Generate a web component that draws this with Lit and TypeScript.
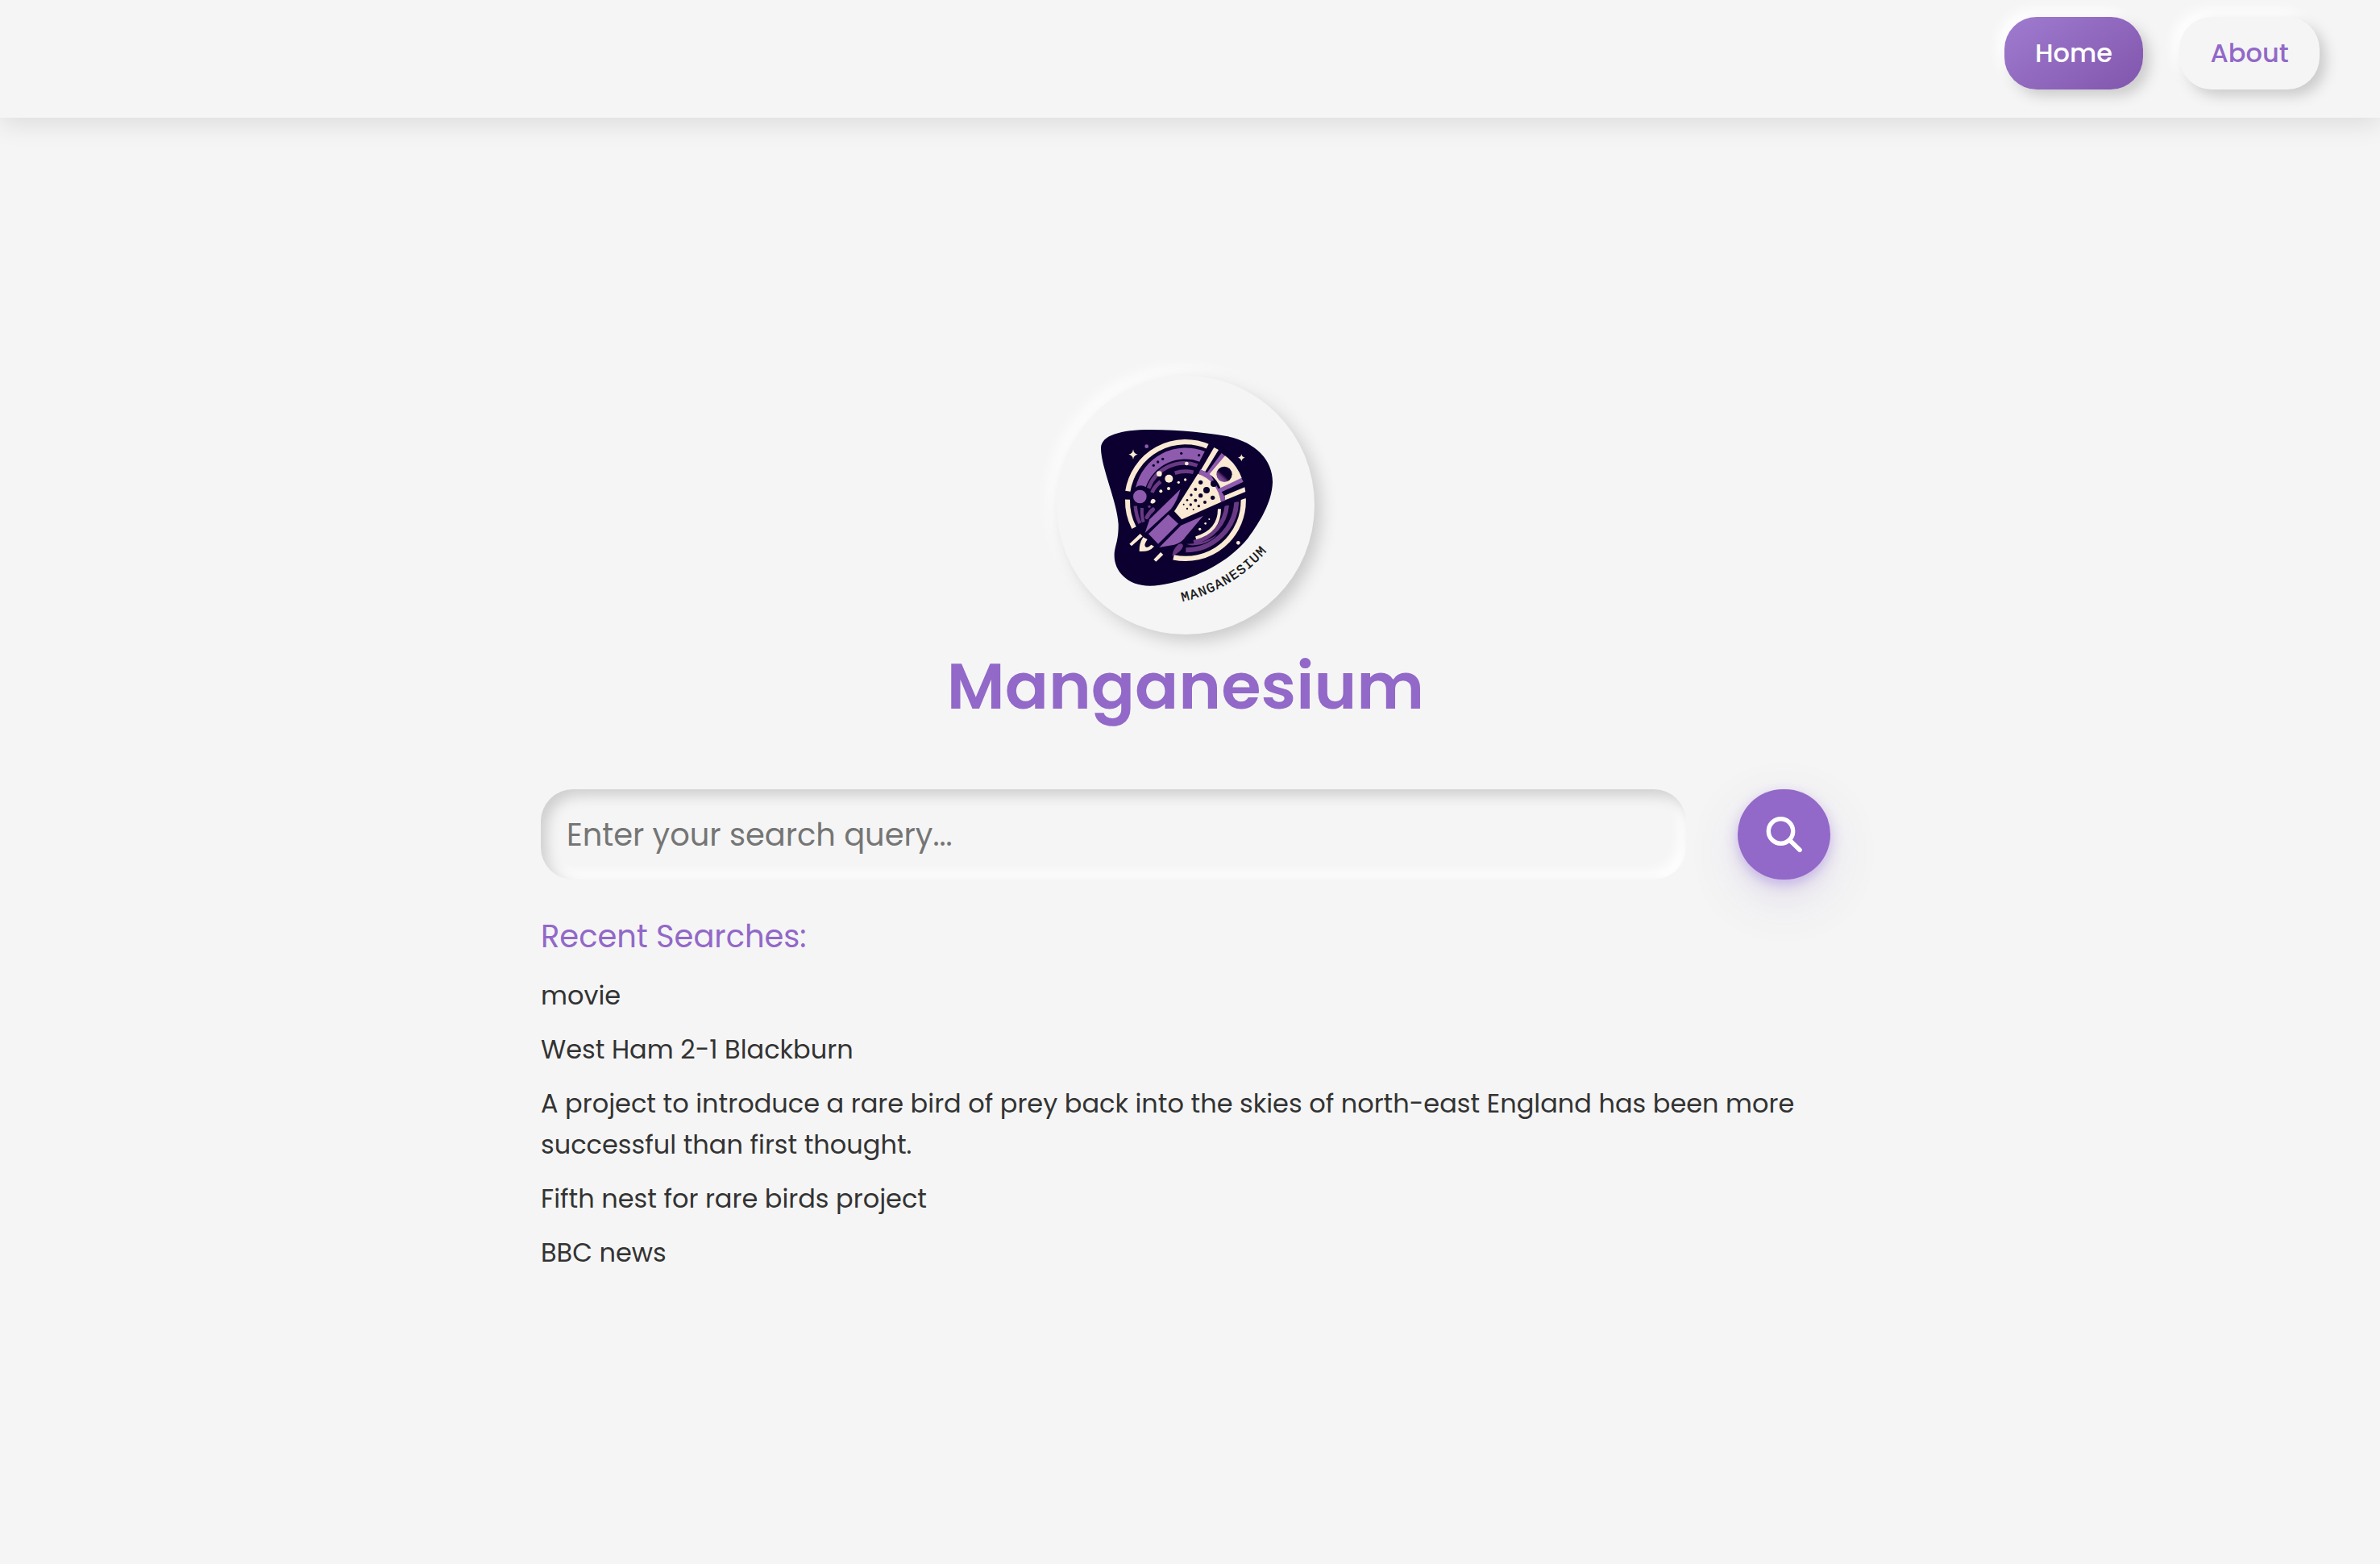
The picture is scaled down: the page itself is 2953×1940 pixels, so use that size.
import { LitElement, html, css, svg } from "lit";
import { customElement, property } from "lit/decorators.js";
import { classMap } from "lit/directives/class-map.js";

type Dot = [x: number, y: number, r: number];

const CREAM_DOTS: Dot[] = [
  [576, 435, 7], [474, 473, 10], [510, 491, 15], [571, 495, 5], [546, 505, 5],
  [509, 528, 6], [480, 538, 6], [660, 642, 3], [646, 658, 4], [625, 679, 5], [768, 730, 7],
];

const DARK_DOTS: Dot[] = [
  [556, 397, 5], [622, 404, 5], [487, 418, 5], [469, 429, 5], [453, 442, 5],
  [628, 505, 8], [677, 510, 12], [609, 531, 6], [650, 534, 12], [593, 552, 5],
  [628, 554, 8], [673, 562, 8], [578, 571, 4], [609, 572, 6], [644, 579, 6],
  [565, 587, 3], [591, 588, 5], [621, 593, 5], [578, 603, 3.5], [601, 606, 3],
];

@customElement("mg-emblem")
class Emblem extends LitElement {
  static styles = css`
    :host { display: block; width: 320px; height: 321px; }
    svg { display: block; width: 100%; height: 100%; }
    .ink { fill: #0b0030; }
    .cream { fill: #faead3; }
    .purple { fill: #8f5bae; }
    .plum { fill: #693a83; }
    .line { fill: none; }
    .line.cream-line { stroke: #faead3; }
    .line.plum-line { stroke: #693a83; }
    .wordmark {
      font: 400 50px "Liberation Mono", "DejaVu Sans Mono", monospace;
      fill: #111;
      stroke: #111;
      stroke-width: 1;
    }
  `;

  private dots(list: Dot[], cls: string) {
    return list.map(([x, y, r]) => svg`<circle class=${cls} cx=${x} cy=${y} r=${r}></circle>`);
  }

  render() {
    return html`
      <svg viewBox="92 108 960 963" role="img" aria-label="Manganesium">
        <defs>
          <linearGradient id="moon" x1="0.1" y1="0.9" x2="0.65" y2="0.3">
            <stop offset="0" stop-color="#8f5bae"></stop>
            <stop offset="0.4" stop-color="#693a83"></stop>
            <stop offset="0.65" stop-color="#0b0030"></stop>
          </linearGradient>
          <path id="curve" d="M560 949 Q755 903 882 752"></path>
        </defs>

        <path class="ink" d="M257 380 C255 330 330 309 440 309 C560 310 650 321 720 332 C830 352 897 420 896 505 C893 580 850 650 805 712 C725 815 560 885 440 890 C350 890 305 830 307 775 C308 740 323 725 322 660 C318 580 258 450 257 380 Z"></path>

        <!-- porthole rim -->
        <path class="line cream-line" stroke-width="19" d="M357 538 A217 217 0 0 1 659 373"></path>
        <path class="line cream-line" stroke-width="18" d="M356 569 A216 216 0 0 0 380 674"></path>
        <path class="line cream-line" stroke-width="19" d="M787 565 A215 215 0 0 1 527 784"></path>

        <!-- orbit bands -->
        <path class="purple" d="M386 524 A192 192 0 0 1 646 391 L626 429 A155 155 0 0 0 424 522 Q403 511 386 524 Z"></path>
        <path class="line plum-line" stroke-width="14" d="M434 527 A142 142 0 0 1 616 442"></path>
        <path class="line plum-line" stroke-width="14" d="M447 543 Q456 520 479 502"></path>
        <path class="line plum-line" stroke-width="14" d="M532 470 Q565 460 601 467"></path>
        <path class="line plum-line" stroke-width="13" d="M385 593 Q388 630 402 657"></path>
        <path class="line plum-line" stroke-width="12" d="M410 600 Q408 630 415 653"></path>
        <path class="line plum-line" stroke-width="15" stroke-linecap="round" d="M428 635 Q438 616 451 606"></path>
        <path class="line plum-line" stroke-width="18" d="M762 577 A190 190 0 0 1 573 757"></path>
        <path class="line plum-line" stroke-width="16" d="M726 590 A155 155 0 0 1 602 728"></path>
        <path class="plum" d="M575 734 Q640 735 690 700 Q650 742 590 739 Z"></path>
        <path class="line cream-line" stroke-width="12" d="M698 604 Q698 687 610 712"></path>

        <circle class="purple" cx="402" cy="558" r="25"></circle>
        <circle class="purple" cx="427" cy="371" r="7"></circle>
        <path class="cream" d="M442 582 Q440 568 452 566 Q464 570 458 580 L450 584 Z"></path>
        <circle class="plum" cx="437" cy="595" r="5"></circle>

        <!-- nose section -->
        <path class="ink" d="M664 350 L535 600 L560 655 L815 556 Q790 420 664 350 Z"></path>
        <path class="cream" d="M678 375 L695 384 L645 465 L629 459 Z"></path>
        <path class="cream" d="M717 554 L792 523 L795 540 L719 571 Z"></path>
        <path class="purple" d="M706 396 L720 407 L667 479 L694 529 L780 488 L787 503 L706 541 Q718 555 720 572 L704 578 Q690 505 620 473 L627 457 L652 469 Z"></path>
        <path class="cream" d="M719 406 Q762 437 781 488 L702 526 Q690 495 661 474 Z"></path>
        <circle cx="716" cy="475" r="29" fill="url(#moon)"></circle>
        <path class="cream" d="M618 473 Q690 498 704 578 L558 643 L530 613 Z"></path>
        ${this.dots(CREAM_DOTS, "cream")}
        ${this.dots(DARK_DOTS, "ink")}

        <!-- hull, fins and exhaust -->
        <path class="purple" d="M553 530 Q540 575 518 604 L421 693 L438 643 Z"></path>
        <path class="purple" d="M508 625 L545 659 L470 734 L434 697 Z"></path>
        <path class="purple" d="M638 629 L574 705 Q557 731 530 737 L474 747 L555 665 Z"></path>
        <path class="plum" d="M522 779 Q525 753 545 736 Q560 728 563 742 Q556 765 522 779 Z"></path>
        <path class="cream" d="M403 696 L412 706 L371 742 L363 734 Z"></path>
        <path class="cream" d="M414 709 Q398 735 400 762 Q437 765 455 743 L444 737 Q431 751 423 745 Q415 738 430 717 Z"></path>
        <path class="cream" d="M479 765 L489 774 L462 800 L453 792 Z"></path>

        <!-- stars -->
        <path class="cream" d="M377 382 Q379 399 394 401 Q379 403 377 420 Q375 403 360 401 Q375 399 377 382 Z"></path>
        <path class="cream" d="M780 400 Q782 411 793 413 Q782 415 780 427 Q778 415 767 413 Q778 411 780 400 Z"></path>

        <text class="wordmark"><textPath href="#curve" textLength="372" lengthAdjust="spacing">MANGANESIUM</textPath></text>
      </svg>
    `;
  }
}

@customElement("mg-nav")
class Nav extends LitElement {
  static styles = css`
    :host {
      display: flex;
      justify-content: flex-end;
      align-items: flex-start;
      gap: 44.8px;
      box-sizing: border-box;
      height: 146px;
      padding: 21px 75px 0;
      background: #f5f5f5;
      box-shadow: 0 8px 30px rgba(0, 0, 0, 0.1);
    }
    .link {
      padding: 19.4px 38.4px;
      border-radius: 40px;
      color: #9268c8;
      font-size: 32px;
      font-weight: 500;
      line-height: 51.2px;
      text-decoration: none;
      background: #f5f5f5;
      box-shadow: 8px 8px 16px #cccccc, -8px -8px 16px #ffffff;
    }
    .link.active {
      color: #fff;
      background: linear-gradient(145deg, #9f7ccf, #8155ad);
    }
  `;

  @property() current = "Home";

  render() {
    return html`${["Home", "About"].map(
      (label) => html`<a class=${classMap({ link: true, active: label === this.current })}>${label}</a>`
    )}`;
  }
}

@customElement("app-root")
class AppRoot extends LitElement {
  static styles = css`
    :host {
      display: block;
      width: 100%;
      height: 1940px;
      overflow: hidden;
      background: #f5f5f5;
      color: #333;
      font-family: Poppins, Inter, sans-serif;
    }
    .page {
      padding-right: 11px;
    }
    .main {
      display: flex;
      flex-direction: column;
      align-items: center;
      width: 1600px;
      margin: 0 auto;
      padding-top: 320px;
    }
    .badge {
      width: 320px;
      height: 321px;
      border-radius: 50%;
      background: #f5f5f5;
      box-shadow: 8px 8px 20px #cacaca, -8px -8px 20px #ffffff;
    }
    .title {
      margin: 0;
      color: #9268c8;
      font-size: 80px;
      font-weight: 600;
      line-height: 128px;
    }
    .search {
      display: flex;
      gap: 64px;
      width: 100%;
      margin-top: 64px;
    }
    .query {
      flex: 1;
      min-width: 0;
      box-sizing: border-box;
      height: 112px;
      padding: 0 32px;
      border: 0;
      outline: 0;
      border-radius: 40px;
      font: 400 38.4px Poppins, Inter, sans-serif;
      color: #333;
      background: #f5f5f5;
      box-shadow: inset 8px 8px 16px #cfcfcf, inset -8px -8px 16px #ffffff;
    }
    .query::placeholder { color: #757575; opacity: 1; }
    .submit {
      display: flex;
      align-items: center;
      justify-content: center;
      width: 115px;
      height: 112px;
      padding: 0;
      border: 0;
      border-radius: 56px;
      background: #9268c8;
      box-shadow: 0 6px 16px rgba(146, 104, 220, 0.4), 0 22px 64px rgba(120, 90, 170, 0.16);
    }
    .glass { width: 48px; height: 48px; }
    .recent {
      align-self: stretch;
      margin-top: 40px;
    }
    .heading {
      margin: 0 0 16.6px;
      color: #9268c8;
      font-size: 38.4px;
      font-weight: 400;
      line-height: 1.6;
    }
    .list {
      display: flex;
      flex-direction: column;
      gap: 16px;
      margin: 0;
      padding: 0;
      list-style: none;
      font-size: 32px;
      line-height: 51px;
    }
  `;

  private searches = [
    "movie",
    "West Ham 2-1 Blackburn",
    "A project to introduce a rare bird of prey back into the skies of north-east England has been more successful than first thought.",
    "Fifth nest for rare birds project",
    "BBC news",
  ];

  render() {
    return html`
      <mg-nav></mg-nav>
      <div class="page">
        <main class="main">
          <div class="badge"><mg-emblem></mg-emblem></div>
          <h1 class="title">Manganesium</h1>
          <div class="search">
            <input class="query" type="text" placeholder="Enter your search query..." />
            <button class="submit" aria-label="Search">
              <svg class="glass" viewBox="0 0 48 48" fill="none" stroke="#fff" stroke-linecap="round">
                <circle cx="19.5" cy="20" r="15.2" stroke-width="5.4"></circle>
                <path d="M31.2 31.7 L43 43.2" stroke-width="5.6"></path>
              </svg>
            </button>
          </div>
          <section class="recent">
            <h2 class="heading">Recent Searches:</h2>
            <ul class="list">${this.searches.map((s) => html`<li>${s}</li>`)}</ul>
          </section>
        </main>
      </div>
    `;
  }
}
